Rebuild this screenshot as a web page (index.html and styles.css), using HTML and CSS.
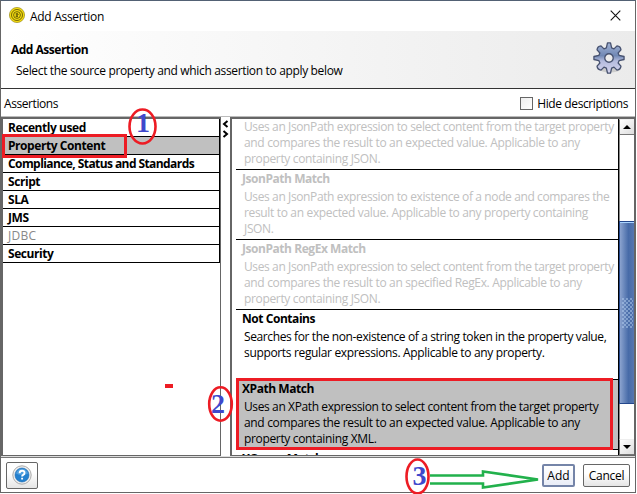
FILE: index.html
```
<!DOCTYPE html>
<html lang="en">
<head>
<meta charset="utf-8">
<title>Add Assertion</title>
<link rel="stylesheet" href="styles.css">
</head>
<body>
<div class="window">
  <div class="titlebar">
    <svg class="app-icon" width="16" height="16" viewBox="0 0 16 16"><circle cx="8" cy="8" r="7.6" fill="#f4db12" stroke="#8a7c00" stroke-width=".6"/><g fill="none" stroke="#564d00" stroke-width=".8"><circle cx="8" cy="8" r="5.5"/><circle cx="8" cy="8" r="3.4"/><path d="M8 5.8v4.4M6.6 6.8h2.2q.8.6 0 1.2H6.8M6.6 9.4h2.4"/></g></svg>
    <span class="caption">Add Assertion</span>
    <svg class="close" width="11" height="11" viewBox="0 0 11 11"><path d="M.7.7l9.6 9.6M10.3.7L.7 10.3" stroke="#111" stroke-width="1.1"/></svg>
  </div>
  <div class="header">
    <div>
      <h1>Add Assertion</h1>
      <p>Select the source property and which assertion to apply below</p>
    </div>
    <svg class="gear" width="32" height="34" viewBox="0 0 34 34">
      <defs><linearGradient id="g" x1="0" y1="0" x2="0" y2="1"><stop offset="0" stop-color="#a3b4d6"/><stop offset=".42" stop-color="#7088b4"/><stop offset=".6" stop-color="#b4bbdd"/><stop offset="1" stop-color="#d5d5ee"/></linearGradient></defs>
      <ellipse cx="18" cy="29" rx="11" ry="3.5" fill="#ccc"/>
      <path fill="url(#g)" stroke="#46516f" stroke-width="1.4" stroke-linejoin="round" fill-rule="evenodd" d="M15.400 1h3.200l1.200 5.300 2.500 1 3.200-3.200q3.800.4 4.200 4.200l-3 3.400 1 2.500 5.300 1.200v3.200l-5.300 1.200-1 2.500 3 3.400q-.4 3.800-4.200 4.200l-3.200-3.200-2.500 1-1.200 5.300h-3.200l-1.200-5.300-2.500-1-3.200 3.200q-3.800-.4-4.200-4.200l3-3.400-1-2.500-5.300-1.200v-3.200l5.300-1.200 1-2.500-3-3.400q.4-3.800 4.200-4.200l3.200 3.200 2.500-1zM17 12.500a4.500 4.500 0 1 0 0 9 4.500 4.500 0 1 0 0-9z"/>
    </svg>
  </div>
  <div class="labels">
    <span class="assertions">Assertions</span>
    <label class="hide"><i class="box"></i><span>Hide descriptions</span></label>
  </div>
  <div class="panes">
    <div class="left">
      <ul>
        <li>Recently used</li>
        <li class="selected">Property Content</li>
        <li class="long">Compliance, Status and Standards</li>
        <li>Script</li>
        <li>SLA</li>
        <li>JMS</li>
        <li class="off">JDBC</li>
        <li>Security</li>
      </ul>
    </div>
    <div class="divider"><svg width="7" height="18" viewBox="0 0 7 18"><path d="M5.500 1L2 4l3.500 3M1.500 11L5 14l-3.500 3" fill="none" stroke="#000" stroke-width="2"/></svg></div>
    <div class="right">
      <div class="items">
        <div class="item disabled first"><p>Uses an JsonPath expression to select content from the target property<br>and compares the result to an expected value. Applicable to any<br>property containing JSON.</p></div>
        <div class="item disabled"><h2>JsonPath Match</h2><p>Uses an JsonPath expression to existence of a node and compares the<br>result to an expected value. Applicable to any property containing<br>JSON.</p></div>
        <div class="item disabled"><h2>JsonPath RegEx Match</h2><p>Uses an JsonPath expression to select content from the target property<br>and compares the result to an specified RegEx. Applicable to any<br>property containing JSON.</p></div>
        <div class="item"><h2>Not Contains</h2><p>Searches for the non-existence of a string token in the property value,<br>supports regular expressions. Applicable to any property.</p></div>
        <div class="item active"><h2>XPath Match</h2><p>Uses an XPath expression to select content from the target property<br>and compares the result to an expected value. Applicable to any<br>property containing XML.</p></div>
        <div class="item"><h2>XQuery Match</h2></div>
      </div>
      <div class="scroll">
        <div class="btn"><i class="up"></i></div>
        <div class="track"><div class="thumb"><i class="grip"></i></div></div>
        <div class="btn"><i class="down"></i></div>
      </div>
    </div>
  </div>
  <div class="footer">
    <div class="button help"><svg width="20" height="20" viewBox="0 0 20 20"><circle cx="10" cy="10" r="9.200" fill="#eee" stroke="#aaa"/><circle cx="10" cy="10" r="7" fill="#2380cf" stroke="#1766af" stroke-width=".6"/><path d="M4 8.500a6.200 6.200 0 0 1 12 0q-6 3-12 0z" fill="#68b0e8" opacity=".6"/><path d="M7.600 8.200q0-2.500 2.500-2.500t2.400 2.200q0 1.300-1.300 1.900-1.100.6-1.100 1.700M10.100 12.700v1.900" fill="none" stroke="#fff" stroke-width="1.900"/></svg></div>
    <div class="button add">Add</div>
    <div class="button cancel">Cancel</div>
  </div>
</div>
<svg class="marks" width="637" height="494" viewBox="0 0 637 494">
  <g fill="none" stroke="#ed1c24" stroke-width="3">
    <rect x="3.500" y="135.500" width="122" height="21"/>
    <rect x="237.500" y="379.500" width="374" height="69"/>
    <g stroke-width="2.600"><ellipse cx="142.500" cy="126.500" rx="13" ry="17"/><ellipse cx="220.500" cy="404" rx="11.300" ry="16.700"/><ellipse cx="417.500" cy="476.500" rx="11" ry="17"/></g>
  </g>
  <path d="M165 384h8v4h-8z" fill="#ed1c24"/>
  <path d="M430 475.500h53V471.500l55 8-55 8V483.500H430" fill="none" stroke="#22b14c" stroke-width="2.600"/>
  <g class="digits"><text x="136" y="132">1</text><text x="211" y="413">2</text><text x="412.500" y="485">3</text></g>
</svg>
</body>
</html>
```
FILE: styles.css
```
* { box-sizing: border-box; }
body { margin: 0; width: 637px; height: 494px; overflow: hidden; background: #fff; font: 12px "Open Sans", "Noto Sans", sans-serif; letter-spacing: -.34px; color: #000; white-space: nowrap; }
h1, h2, p, ul { margin: 0; padding: 0; font-size: 12px; }
.window { width: 636px; height: 493px; border: 1px solid #666; border-top-color: #526174; background: #fff; display: flex; flex-direction: column; }
.titlebar { height: 30px; flex: none; display: flex; align-items: center; padding: 0 8px; }
.app-icon { margin-top: -2px; }
.caption { margin-left: 5px; flex: 1; letter-spacing: -.3px; }
.close { margin-right: 6px; margin-top: -1px; }
.header { height: 58px; flex: none; border-bottom: 1px solid #333; background: linear-gradient(90deg, #fff, #ebebeb); display: flex; justify-content: space-between; padding: 10px 10px 0 10px; line-height: 18px; }
.header h1 { letter-spacing: -.5px; }
.header p { padding: 3px 0 0 5px; }
.labels { height: 27px; flex: none; display: flex; justify-content: space-between; align-items: center; padding: 2px 7px 0 3px; }
.assertions { letter-spacing: -.42px; }
.hide { display: flex; align-items: center; gap: 4px; letter-spacing: -.4px; }
.box { width: 13px; height: 13px; border: 1px solid #666; background: linear-gradient(135deg, #eee, #fff); }
.panes { display: flex; height: 341px; flex: none; border-top: 1px solid #bbb; border-bottom: 1px solid #ddd; }
.left { width: 220px; border: 1px solid #666; border-width: 2px 1px 1px 2px; }
ul { list-style: none; border-right: 1px solid #000; }
li { height: 18px; border-bottom: 1px solid #000; padding-left: 5px; line-height: 17px; font-weight: 700; letter-spacing: -.43px; }
.long { letter-spacing: -.58px; }
.selected { background: #c0c0c0; }
.off { color: #888; font-weight: 400; letter-spacing: .3px; }
.divider { width: 9px; padding: 3px 0 0 1px; }
.divider svg { display: block; }
.right { width: 405px; display: flex; border: 1px solid #666; border-width: 2px 1px 1px 2px; overflow: hidden; }
.items { flex: 1; min-width: 0; padding-left: 4px; border-right: 1px solid #000; overflow: hidden; }
.item { height: 70px; border-bottom: 1px solid #000; padding-left: 6px; }
.item.first { height: 51px; }
.item h2 { line-height: 18px; letter-spacing: -.45px; }
.item p { line-height: 16px; padding: 1px 0 0 2px; }
.item p::first-line { letter-spacing: -.385px; }
.item.first p { padding-top: 0; }
.disabled { color: #c0c0c0; }
.active { background: #c0c0c0; }
.scroll { width: 15px; flex: none; display: flex; flex-direction: column; }
.btn { height: 16px; flex: none; border: 1px solid #777; border-top-color: #eee; border-right: 0; background: linear-gradient(135deg, #fff, #ddd); display: flex; align-items: center; justify-content: center; }
.up, .down { border: 4px solid transparent; }
.up { border-bottom-color: #000; border-top: 0; }
.down { border-top-color: #000; border-bottom: 0; }
.track { flex: 1; border-left: 1px solid #888; padding-top: 86px; }
.thumb { height: 183px; margin-left: -1px; border: 1px solid #24478c; border-right: 0; box-shadow: inset 0 1px #a9d4ff; background: linear-gradient(90deg, #8ba3cf, #476ba8 60%, #5877b0); display: flex; align-items: center; justify-content: center; }
.grip { width: 11px; height: 30px; background: radial-gradient(circle at 1px 1px, #b9d3f2 .6px, transparent .8px) 0 0 / 4px 4px, radial-gradient(circle at 3px 3px, #b9d3f2 .6px, transparent .8px) 0 0 / 4px 4px; }
.footer { flex: 1; border-top: 1px solid #777; display: flex; align-items: center; padding: 0 5px 0 5px; gap: 8px; }
.button { height: 23px; border: 1px solid #666; border-radius: 2px; background: linear-gradient(#fff 40%, #e5e5e5); display: flex; align-items: center; justify-content: center; letter-spacing: -.25px; }
.help { width: 32px; height: 27px; margin-right: auto; }
.add { width: 33px; border: 2px solid #7484a8; background: linear-gradient(#fff, #e9edf7); letter-spacing: 0; }
.cancel { width: 47px; }
.marks { position: absolute; left: 0; top: 0; }
.digits { font: 700 28px "Liberation Serif", serif; letter-spacing: 0; fill: #3f48cc; }
```
